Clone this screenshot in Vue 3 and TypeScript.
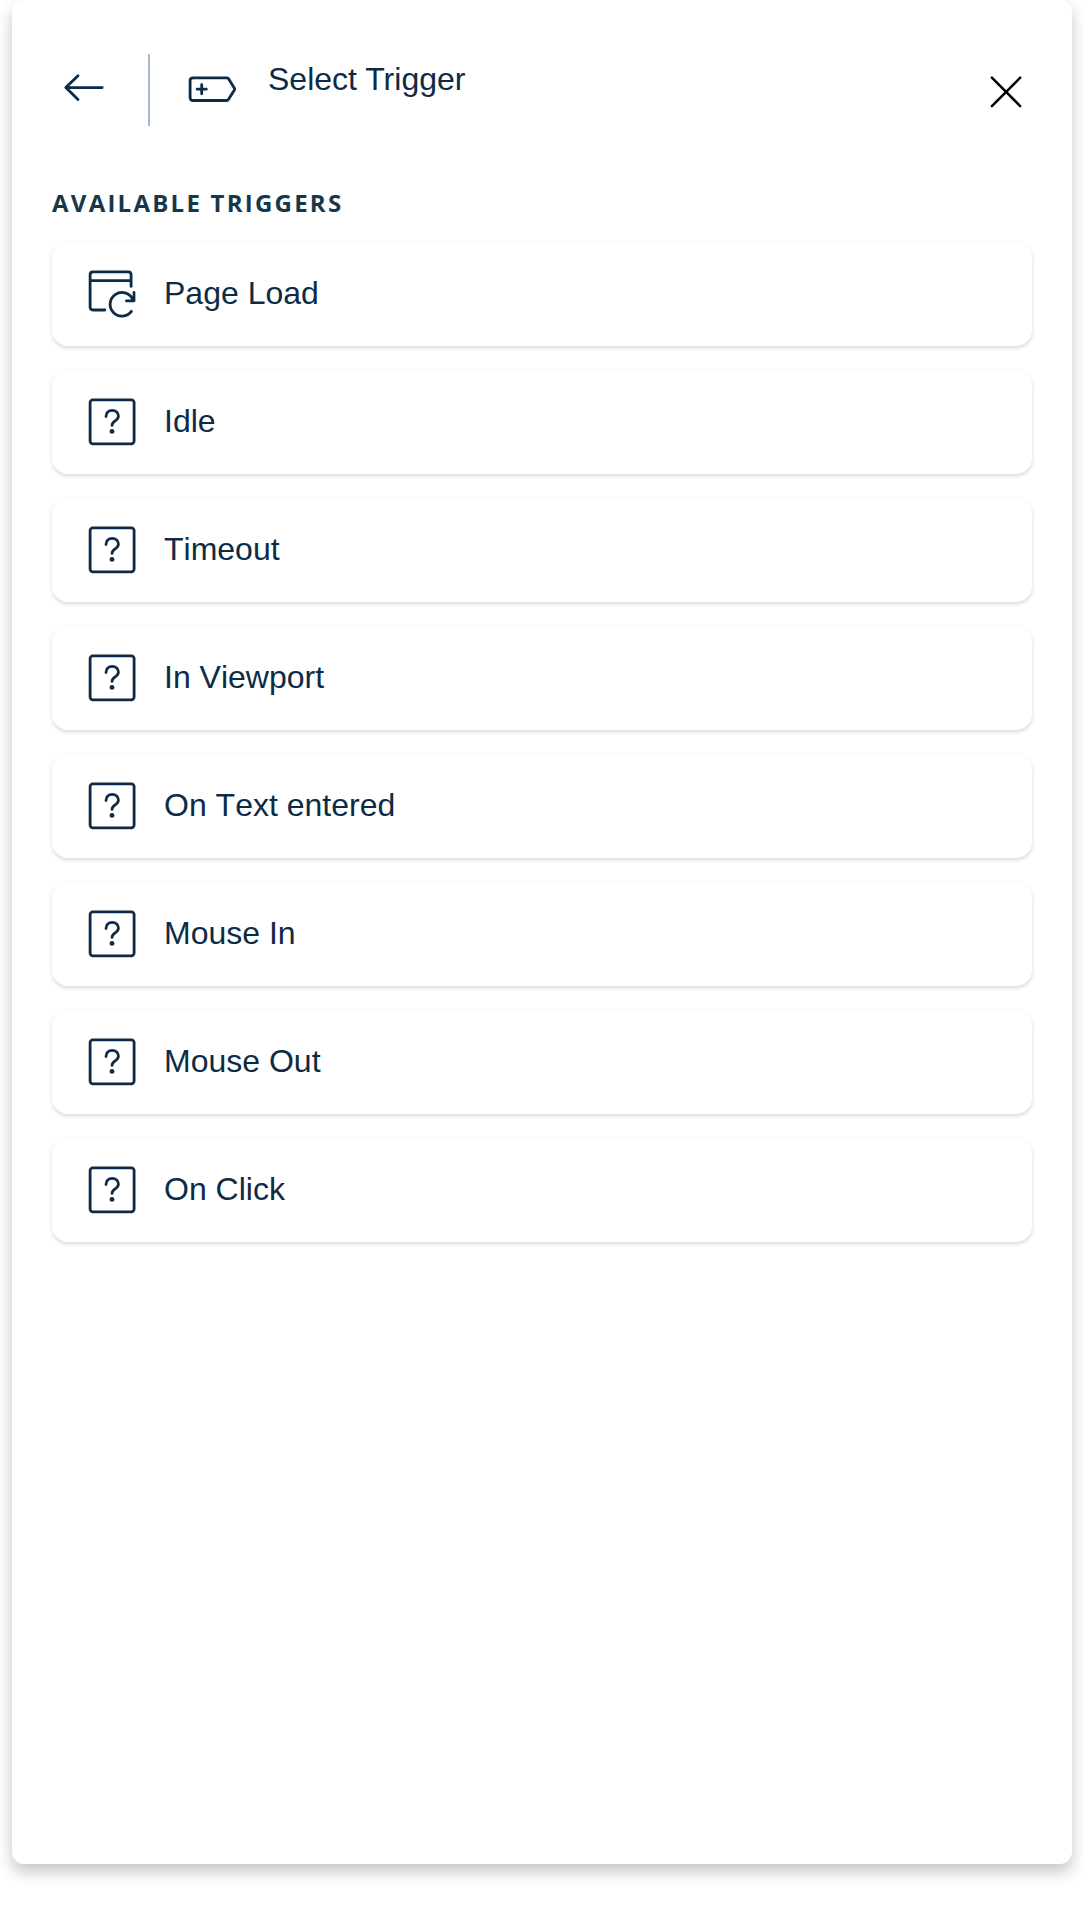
<script setup lang="ts">
interface Trigger {
  label: string
  icon: 'page' | 'unknown'
}

const triggers: Trigger[] = [
  { label: 'Page Load', icon: 'page' },
  { label: 'Idle', icon: 'unknown' },
  { label: 'Timeout', icon: 'unknown' },
  { label: 'In Viewport', icon: 'unknown' },
  { label: 'On Text entered', icon: 'unknown' },
  { label: 'Mouse In', icon: 'unknown' },
  { label: 'Mouse Out', icon: 'unknown' },
  { label: 'On Click', icon: 'unknown' },
]
</script>

<template>
  <div class="page">
    <main class="panel">
      <header class="header">
        <button class="back" aria-label="Back">
          <svg class="icon" width="48" height="48" viewBox="0 0 48 48">
            <path d="M42.2 23.6H5.8M18 11.7 5.8 23.6 18 35.6" />
          </svg>
        </button>
        <span class="divider"></span>
        <svg class="icon tag" width="48" height="48" viewBox="0 0 48 48">
          <path d="M5 13.8H38.7Q39.8 13.8 40.4 14.6L46.4 24.2Q46.9 25.2 46.4 26.1L40.4 35.5Q39.8 36.5 38.7 36.5H5Q2.1 36.5 2.1 33.5V16.8Q2.1 13.8 5 13.8Z" />
          <path d="M9.1 25.2H18.3M13.7 20.6V29.8" />
        </svg>
        <h1 class="title">Select Trigger</h1>
        <button class="close" aria-label="Close">
          <svg class="icon" width="48" height="48" viewBox="0 0 48 48">
            <path d="M9.9 9.7 38.2 38.1M38.2 9.7 9.9 38.1" />
          </svg>
        </button>
      </header>

      <h2 class="caption">AVAILABLE TRIGGERS</h2>
      <ul class="list">
        <li v-for="trigger in triggers" :key="trigger.label" class="card">
          <svg v-if="trigger.icon === 'page'" class="icon" width="48" height="48" viewBox="0 0 48 48">
            <path d="M16.8 40H5Q2.1 40 2.1 37.1V4.7Q2.1 1.8 5 1.8H40.2Q43.1 1.8 43.1 4.7V16.4M2.1 10.7H43.1" />
            <path d="M44.6 29.2A11.8 11.8 0 1 0 43.4 41.3M46 22.5V30.8H38.4" />
          </svg>
          <svg v-else class="icon" width="48" height="48" viewBox="0 0 48 48">
            <rect x="2.1" y="1.9" width="44" height="44" rx="2.8" />
            <path d="M18 18.6C18 14.8 20.6 12.4 24.2 12.4S30.4 14.8 30.4 18.3C30.4 22.8 24 23 24 27.4" />
            <circle class="dot" cx="24" cy="33.4" r="2.4" />
          </svg>
          <span class="label">{{ trigger.label }}</span>
        </li>
      </ul>
    </main>
  </div>
</template>

<style>
body {
  background: #fff;
}
</style>

<style scoped>
.page {
  box-sizing: border-box;
  height: 1906px;
  padding: 0 12px 42px;
  background: #fff;
}

.panel {
  box-sizing: border-box;
  height: 1864px;
  padding: 54px 40px 0;
  border-radius: 12px;
  background: #fff;
  box-shadow: 0 8px 16px rgba(0, 0, 0, 0.23);
  color: #0d2b45;
  font-family: "Liberation Sans", Arial, sans-serif;
}

.header {
  display: flex;
  align-items: flex-start;
  height: 72px;
}

button {
  padding: 0;
  border: 0;
  background: none;
  color: inherit;
}

.icon {
  display: block;
  flex: none;
  fill: none;
  stroke: currentColor;
  stroke-width: 2.8;
  stroke-linecap: round;
  stroke-linejoin: round;
}

.back {
  margin: 10px 0 0 8px;
}

.divider {
  width: 2px;
  height: 72px;
  margin-left: 40px;
  background: #a5b9d0;
}

.tag {
  margin: 10px 0 0 38px;
}

.title {
  margin: 6px 0 0 32px;
  font-size: 32px;
  font-weight: 400;
  line-height: 38px;
}

.close {
  margin: 14px 2px 0 auto;
  color: #000;
}

.close .icon {
  stroke-width: 2.5;
}

.caption {
  margin: 61px 0 0;
  color: #17384a;
  font-family: "Open Sans", sans-serif;
  font-size: 24px;
  font-weight: 700;
  line-height: 32px;
  letter-spacing: 2.24px;
}

.list {
  display: flex;
  flex-direction: column;
  gap: 24px;
  margin: 23px 0 0;
  padding: 0;
  list-style: none;
}

.card {
  display: flex;
  align-items: center;
  gap: 28px;
  box-sizing: border-box;
  height: 104px;
  padding: 0 36px;
  border-radius: 16px;
  background: #fff;
  box-shadow: 0 2px 4px rgba(15, 42, 71, 0.18);
}

.dot {
  fill: currentColor;
  stroke: none;
}

.label {
  padding-bottom: 2px;
  font-size: 32px;
  line-height: 38px;
  font-kerning: none;
}
</style>
